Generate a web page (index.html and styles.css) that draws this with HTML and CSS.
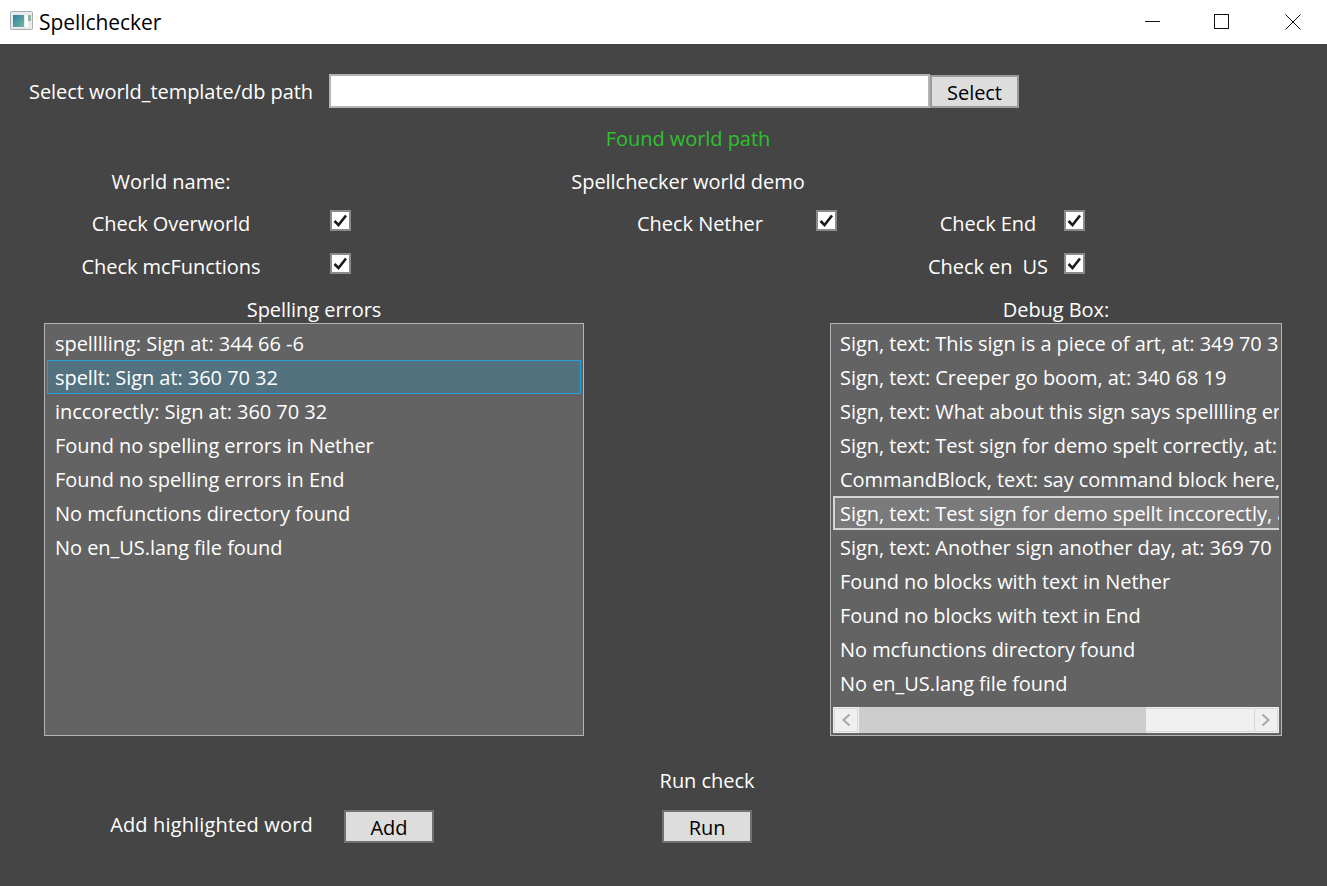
FILE: index.html
```html
<!DOCTYPE html>
<html lang="en">
<head>
<meta charset="utf-8">
<title>Spellchecker</title>
<link rel="stylesheet" href="styles.css">
</head>
<body>
<div class="window">
  <header class="titlebar">
    <svg class="app-icon" width="24" height="20" viewBox="0 0 24 20">
      <defs><linearGradient id="g" x1="0" y1="0" x2="1" y2="1"><stop offset="0" stop-color="#2f7fa8"/><stop offset="1" stop-color="#6fb89a"/></linearGradient></defs>
      <rect x="0.5" y="0.5" width="22" height="18" rx="1" fill="#e8eaec" stroke="#a9adb0"/>
      <rect x="3" y="4" width="11" height="12" fill="url(#g)"/>
      <rect x="15" y="4" width="3" height="12" fill="#ffffff"/>
      <rect x="18" y="4" width="3" height="6" fill="#8fb8a4"/>
    </svg>
    <span class="title">Spellchecker</span>
    <div class="controls">
      <svg class="ctl" width="71" height="44" viewBox="0 0 71 44"><path d="M31 21.5H46" stroke="#111" fill="none"/></svg>
      <svg class="ctl" width="71" height="44" viewBox="0 0 71 44"><rect x="29.5" y="14.5" width="14" height="14" stroke="#111" fill="none"/></svg>
      <svg class="ctl" width="71" height="44" viewBox="0 0 71 44"><path d="M29.5 14.5L44.5 29.5M44.5 14.5L29.5 29.5" stroke="#111" fill="none"/></svg>
    </div>
  </header>
  <main class="content">
    <div class="row path-row">
      <label class="cell">Select world_template/db path</label>
      <input class="path-input" type="text">
      <button class="btn">Select</button>
    </div>
    <div class="row status-row"><span class="cell found">Found world path</span></div>
    <div class="row name-row">
      <span class="cell">World name:</span>
      <span class="cell">Spellchecker world demo</span>
    </div>
    <div class="row check-row first">
      <span class="cell c1">Check Overworld</span>
      <span class="box b1"><svg width="15" height="15" viewBox="0 0 15 15"><path d="M1.5 8L5.5 12L13 2.5" /></svg></span>
      <span class="cell c2">Check Nether</span>
      <span class="box b2"><svg width="15" height="15" viewBox="0 0 15 15"><path d="M1.5 8L5.5 12L13 2.5" /></svg></span>
      <span class="cell c3">Check End</span>
      <span class="box b3"><svg width="15" height="15" viewBox="0 0 15 15"><path d="M1.5 8L5.5 12L13 2.5" /></svg></span>
    </div>
    <div class="row check-row">
      <span class="cell c1">Check mcFunctions</span>
      <span class="box b1"><svg width="15" height="15" viewBox="0 0 15 15"><path d="M1.5 8L5.5 12L13 2.5" /></svg></span>
      <span class="cell c3">Check en <span class="access-key">US</span></span>
      <span class="box b3"><svg width="15" height="15" viewBox="0 0 15 15"><path d="M1.5 8L5.5 12L13 2.5" /></svg></span>
    </div>
    <div class="lists">
      <section class="col col-left">
        <h2 class="col-title">Spelling errors</h2>
        <ul class="list">
          <li>spelllling: Sign at: 344 66 -6</li>
          <li class="selected">spellt: Sign at: 360 70 32</li>
          <li>inccorectly: Sign at: 360 70 32</li>
          <li>Found no spelling errors in Nether</li>
          <li>Found no spelling errors in End</li>
          <li>No mcfunctions directory found</li>
          <li>No en_US.lang file found</li>
        </ul>
      </section>
      <section class="col col-right">
        <h2 class="col-title">Debug Box:</h2>
        <div class="list scroller">
          <ul class="scroll-items">
            <li>Sign, text: This sign is a piece of art, at: 349 70 32</li>
            <li>Sign, text: Creeper go boom, at: 340 68 19</li>
            <li>Sign, text: What about this sign says spelllling error, at: 344 66 -6</li>
            <li>Sign, text: Test sign for demo spelt correctly, at: 360 70 32</li>
            <li>CommandBlock, text: say command block here, at: 350 70 30</li>
            <li class="focused">Sign, text: Test sign for demo spellt inccorectly, at: 360 70 32</li>
            <li>Sign, text: Another sign another day, at: 369 70</li>
            <li>Found no blocks with text in Nether</li>
            <li>Found no blocks with text in End</li>
            <li>No mcfunctions directory found</li>
            <li>No en_US.lang file found</li>
          </ul>
          <div class="hbar">
            <span class="arrow"><svg width="10" height="14" viewBox="0 0 10 14"><path d="M8.5 1.5L2.5 7L8.5 12.5"/></svg></span>
            <span class="thumb"></span>
            <span class="track"></span>
            <span class="arrow"><svg width="10" height="14" viewBox="0 0 10 14"><path d="M1.5 1.5L7.5 7L1.5 12.5"/></svg></span>
          </div>
        </div>
      </section>
    </div>
    <div class="row run-label"><span class="cell">Run check</span></div>
    <div class="row action-row">
      <span class="cell add-label">Add highlighted word</span>
      <button class="btn add-btn">Add</button>
      <button class="btn run-btn">Run</button>
    </div>
  </main>
</div>
</body>
</html>
```

FILE: styles.css
```css
* { box-sizing: border-box; }
html, body { margin: 0; padding: 0; height: 100%; }
body {
  font-family: "Open Sans", "Noto Sans", "Liberation Sans", sans-serif;
  font-size: 20px;
  letter-spacing: -0.05px;
  background: #454545;
  overflow: hidden;
}
.window { display: flex; flex-direction: column; height: 886px; }
.titlebar {
  height: 44px;
  background: #fff;
  color: #000;
  display: flex;
  align-items: center;
  padding-left: 10px;
  flex: none;
}
.app-icon { margin-right: 5px; margin-top: -3px; }
.title { line-height: 44px; font-size: 21px; }
.controls { margin-left: auto; display: flex; }
.ctl { display: block; }

.content { flex: 1; color: #fff; padding-top: 30px; }
.row { display: grid; align-items: center; }
.cell { text-align: center; white-space: nowrap; }
.access-key { margin-left: 5px; }
.path-row { grid-template-columns: 316px 601px 89px; padding-left: 13px; height: 34px; }
.path-input {
  height: 34px;
  width: 601px;
  background: #fff;
  border: 2px solid #b4b4b4;
  padding: 0;
  outline: none;
}
.btn {
  font: inherit;
  letter-spacing: inherit;
  color: #000;
  background: #dddddd;
  border: 2px solid #707070;
  width: 90px;
  height: 33px;
  padding: 2px 0 0;
  line-height: 27px;
}
.path-row .btn { border-color: #9a9a9a; width: 89px; }
.status-row { grid-template-columns: 674px; padding-left: 351px; height: 30px; margin-top: 15px; }
.found { color: #2ec12e; }
.name-row { grid-template-columns: 316px 22px 674px; padding-left: 13px; height: 30px; margin-top: 13px; }
.name-row .cell:last-child { grid-column: 3; }
.check-row {
  grid-template-columns: 316px 1px 21px 249px 200px 16px 21px 83px 136px 8px 21px;
  padding-left: 13px;
  height: 30px;
  margin-top: 13px;
}
.check-row.first { margin-top: 12px; }
.c1 { grid-column: 1; }
.b1 { grid-column: 3; }
.c2 { grid-column: 5; }
.b2 { grid-column: 7; }
.c3 { grid-column: 9; }
.b3 { grid-column: 11; }
.box {
  width: 21px;
  height: 21px;
  background: #fff;
  border: 2px solid #8a8a8a;
  display: flex;
  align-items: center;
  justify-content: center;
  margin-top: -5px;
}
.box svg { display: block; }
.box path { fill: none; stroke: #1c1c1c; stroke-width: 2.6; }

.lists { display: flex; margin-top: 14px; padding-left: 44px; gap: 246px; }
.col { display: flex; flex-direction: column; }
.col-left { width: 540px; }
.col-right { width: 452px; }
.col-title {
  font: inherit;
  letter-spacing: inherit;
  margin: 0;
  height: 28px;
  line-height: 30px;
  text-align: center;
}
.list {
  height: 413px;
  margin: 0;
  padding: 2px;
  list-style: none;
  background: #636363;
  border: 1px solid #b4b4b4;
  overflow: hidden;
}
.list li {
  height: 34px;
  line-height: 34px;
  padding: 0 7px;
  border: 1px solid transparent;
  white-space: nowrap;
}
.list li.selected { background: #54717f; border-color: #26a0da; }
.scroller { display: flex; flex-direction: column; padding-bottom: 2px; }
.scroll-items { list-style: none; margin: 0; padding: 0; flex: 1; overflow: hidden; }
.scroll-items li { width: 560px; padding: 0 6px; }
.list li.focused { background: #7a7a7a; border: 2px solid #d4d4d4; padding: 0 5px; line-height: 32px; }
.hbar { display: flex; height: 26px; flex: none; background: #f0f0f0; }
.arrow {
  width: 24px;
  flex: none;
  margin: 1px;
  background: #f0f0f0;
  border: 1px solid #d6d6d6;
  display: flex;
  align-items: center;
  justify-content: center;
}
.arrow path { fill: none; stroke: #a6a6a6; stroke-width: 2; }
.thumb { width: 287px; background: #cdcdcd; flex: none; }
.track { flex: 1; margin: 1px 0; border-top: 1px solid #d6d6d6; border-bottom: 1px solid #d6d6d6; }

.run-label { grid-template-columns: 100px; padding-left: 657px; height: 30px; margin-top: 29px; }
.action-row { grid-template-columns: 239px 13px 90px 228px 90px; padding-left: 92px; height: 34px; margin-top: 14px; }
.add-label { grid-column: 1; align-self: start; line-height: 32px; letter-spacing: 0.15px; }
.add-btn { grid-column: 3; }
.run-btn { grid-column: 5; }
```
